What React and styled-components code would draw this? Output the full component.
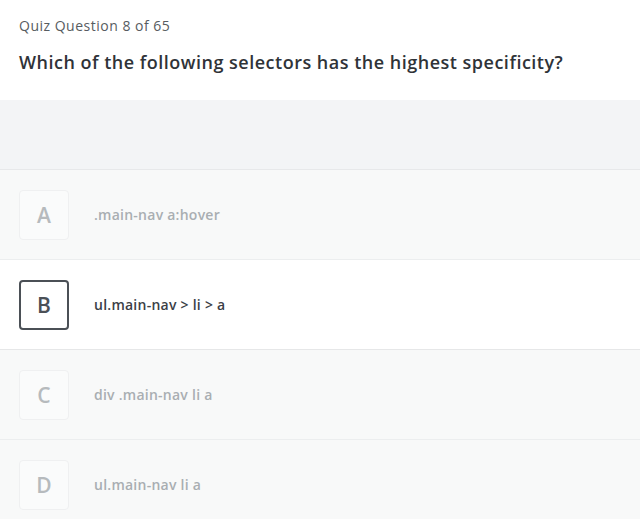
import React from 'react';
import styled, { createGlobalStyle } from 'styled-components';

const GlobalStyle = createGlobalStyle`
  body {
    margin: 0;
    background: #ffffff;
    font-family: "Open Sans", "Liberation Sans", sans-serif;
  }
`;

const options = [
  { letter: 'A', text: '.main-nav a:hover' },
  { letter: 'B', text: 'ul.main-nav > li > a', selected: true },
  { letter: 'C', text: 'div .main-nav li a' },
  { letter: 'D', text: 'ul.main-nav li a' },
];

const App = () => (
  <Page>
    <GlobalStyle />
    <Header>
      <Counter>Quiz Question 8 of 65</Counter>
      <Question>Which of the following selectors has the highest specificity?</Question>
    </Header>
    <Band />
    <List>
      {options.map((o) => (
        <Option key={o.letter} selected={o.selected}>
          <Letter selected={o.selected}>{o.letter}</Letter>
          <Answer selected={o.selected}>{o.text}</Answer>
        </Option>
      ))}
    </List>
  </Page>
);

const Page = styled.div`
  width: 640px;
  height: 519px;
  overflow: hidden;
`;
const Header = styled.div`
  height: 100px;
  padding: 16px 19px 0;
  box-sizing: border-box;
`;
const Counter = styled.div`
  font-size: 14px;
  color: #575c61;
  line-height: 20px;
  letter-spacing: 0.5px;
`;
const Question = styled.div`
  margin-top: 14px;
  font-size: 18px;
  font-weight: 600;
  color: #2f3338;
  line-height: 24px;
  letter-spacing: 0.5px;
`;
const Band = styled.div`
  height: 70px;
  background: #f3f4f6;
  border-bottom: 1px solid #e7e8ea;
  box-sizing: border-box;
`;
const List = styled.div``;
const Option = styled.div`
  height: 90px;
  display: flex;
  align-items: center;
  padding-left: 19px;
  box-sizing: border-box;
  background: ${(p) => (p.selected ? '#ffffff' : '#f8f9f9')};
  border-bottom: 1px solid ${(p) => (p.selected ? '#e6e7e8' : '#eceeef')};
`;
const Letter = styled.div`
  width: 50px;
  height: 50px;
  box-sizing: border-box;
  display: flex;
  align-items: center;
  justify-content: center;
  border-radius: 4px;
  border: ${(p) => (p.selected ? '2px solid #4b5056' : '1px solid #eff0f1')};
  background: ${(p) => (p.selected ? '#ffffff' : '#fafbfb')};
  color: ${(p) => (p.selected ? '#4b5056' : '#b6babd')};
  font-size: 21px;
  font-weight: 600;
`;
const Answer = styled.div`
  margin-left: 25px;
  font-size: 14px;
  font-weight: 600;
  letter-spacing: 0.25px;
  color: ${(p) => (p.selected ? '#3b4046' : '#a9aeb2')};
`;

export default App;
